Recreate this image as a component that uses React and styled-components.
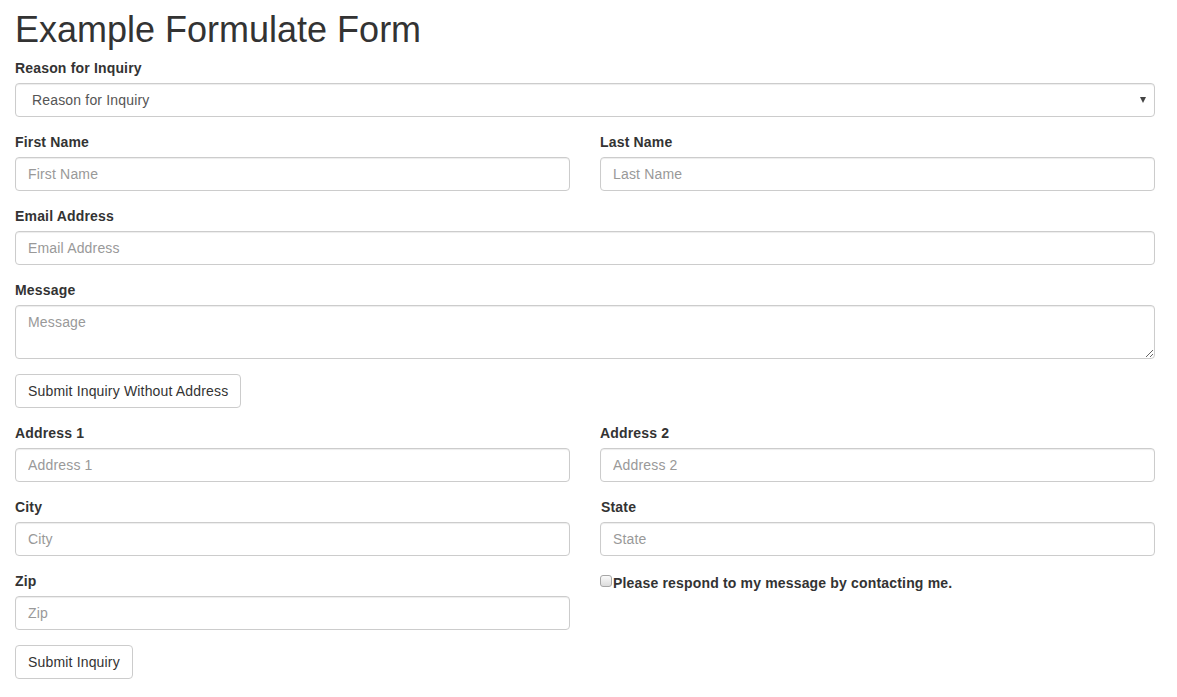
import React from "react";
import styled, { createGlobalStyle } from "styled-components";

const Global = createGlobalStyle`
  html, body { margin: 0; padding: 0; background: #fff; }
  body {
    font-family: "Liberation Sans", Arial, Helvetica, sans-serif;
    font-size: 14px;
    line-height: 1.42857143;
    color: #333;
    letter-spacing: 0.17px;
  }
  *, *::before, *::after { box-sizing: border-box; }
`;

const Container = styled.div`
  width: 1170px;
  padding: 0 15px;
`;

const Title = styled.h1`
  font-size: 36px;
  font-weight: 500;
  line-height: 1.1;
  margin: 10px 0 8px;
  color: #333;
  letter-spacing: 0;
`;

const Group = styled.div`
  margin-bottom: 15px;
`;

const Row = styled.div`
  display: grid;
  grid-template-columns: 1fr 1fr;
  column-gap: 30px;
`;

const Label = styled.label`
  display: block;
  font-weight: 700;
  margin-bottom: 5px;
  line-height: 20px;
  padding-left: ${(p) => (p.$nudge ? "1px" : "0")};
`;

const fieldBase = `
  display: block;
  width: 100%;
  padding: 6px 12px;
  font-family: "Liberation Sans", Arial, Helvetica, sans-serif;
  font-size: 14px;
  line-height: 20px;
  letter-spacing: 0.17px;
  color: #555;
  background: #fff;
  border: 1px solid #ccc;
  border-radius: 4px;
  box-shadow: inset 0 1px 1px rgba(0, 0, 0, 0.075);
  outline: none;
  &::placeholder { color: #999; opacity: 1; }
`;

const Input = styled.input`
  ${fieldBase}
  height: 34px;
`;

const TextArea = styled.textarea`
  ${fieldBase}
  height: 54px;
  resize: vertical;
`;

const SelectWrap = styled.div`
  position: relative;
`;

const Select = styled.select`
  ${fieldBase}
  height: 34px;
  padding-left: 16px;
  appearance: none;
  -webkit-appearance: none;
`;

const Arrow = styled.span`
  position: absolute;
  right: 9px;
  top: 14px;
  width: 0;
  height: 0;
  border-left: 3px solid transparent;
  border-right: 3px solid transparent;
  border-top: 6px solid #444;
  pointer-events: none;
`;

const Button = styled.button`
  display: inline-block;
  padding: 6px 12px;
  font-family: "Liberation Sans", Arial, Helvetica, sans-serif;
  font-size: 14px;
  line-height: 20px;
  letter-spacing: 0.17px;
  color: #333;
  background: #fff;
  border: 1px solid #ccc;
  border-radius: 4px;
  cursor: pointer;
  margin-bottom: ${(p) => p.$mb || "0"};
`;

const CheckLine = styled.div`
  display: flex;
  align-items: flex-start;
  line-height: 20px;
`;

const Check = styled.input`
  appearance: none;
  -webkit-appearance: none;
  width: 12px;
  height: 12px;
  margin: 4px 1px 0 0;
  flex: none;
  border: 1px solid #a6a6a6;
  border-radius: 3px;
  background: linear-gradient(#fafafa, #dcdcdc);
`;

const CheckLabel = styled.label`
  font-weight: 700;
  margin-top: 2px;
`;

const Field = ({ label, placeholder, nudge }) => (
  <Group>
    <Label $nudge={nudge}>{label}</Label>
    <Input placeholder={placeholder} />
  </Group>
);

export default function App() {
  return (
    <>
      <Global />
      <Container>
        <Title>Example Formulate Form</Title>
        <Group>
          <Label>Reason for Inquiry</Label>
          <SelectWrap>
            <Select defaultValue="">
              <option value="">Reason for Inquiry</option>
            </Select>
            <Arrow />
          </SelectWrap>
        </Group>
        <Row>
          <Field label="First Name" placeholder="First Name" />
          <Field label="Last Name" placeholder="Last Name" />
        </Row>
        <Field label="Email Address" placeholder="Email Address" />
        <Group>
          <Label>Message</Label>
          <TextArea rows={2} placeholder="Message" />
        </Group>
        <Button $mb="15px">Submit Inquiry Without Address</Button>
        <Row>
          <Field label="Address 1" placeholder="Address 1" />
          <Field label="Address 2" placeholder="Address 2" />
        </Row>
        <Row>
          <Field label="City" placeholder="City" />
          <Field label="State" placeholder="State" nudge />
        </Row>
        <Row>
          <Field label="Zip" placeholder="Zip" />
          <Group>
            <CheckLine>
              <Check type="checkbox" id="respond" />
              <CheckLabel htmlFor="respond">
                Please respond to my message by contacting me.
              </CheckLabel>
            </CheckLine>
          </Group>
        </Row>
        <Button>Submit Inquiry</Button>
      </Container>
    </>
  );
}
